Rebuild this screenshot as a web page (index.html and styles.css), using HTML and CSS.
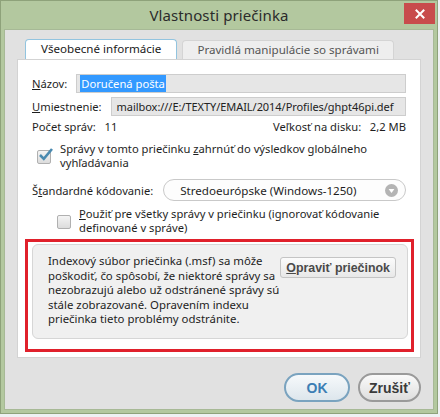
FILE: index.html
```html
<!DOCTYPE html>
<html lang="sk">
<head>
<meta charset="utf-8">
<title>Vlastnosti priečinka</title>
<link rel="stylesheet" href="styles.css">
</head>
<body>
<div class="window">
  <div class="titlebar">
    <span></span>
    <div class="title">Vlastnosti priečinka</div>
    <button class="close" aria-label="Zavrieť">
      <svg width="10" height="10" viewBox="0 0 10 10"><path d="M1.5 1.5 L8.5 8.5 M8.5 1.5 L1.5 8.5" stroke="#fff" stroke-width="2" stroke-linecap="square"/></svg>
    </button>
  </div>
  <div class="client">
    <div class="tabs">
      <div class="tab active">Všeobecné informácie</div>
      <div class="tab">Pravidlá manipulácie so správami</div>
    </div>
    <div class="panel">
      <div class="row field-row">
        <label class="lbl"><u>N</u>ázov:</label>
        <div class="field"><span class="sel">Doručená pošta</span></div>
      </div>
      <div class="row field-row loc">
        <label class="lbl"><u>U</u>miestnenie:</label>
        <div class="field">mailbox:///E:/TEXTY/EMAIL/2014/Profiles/ghpt46pi.def</div>
      </div>
      <div class="row count-row">
        <span>Počet správ:&nbsp;&nbsp; 11</span>
        <span>Veľkosť na disku:&nbsp;&nbsp; 2,2 MB</span>
      </div>
      <div class="check-row first">
        <span class="checkbox checked">
          <svg width="17" height="15" viewBox="0 0 17 15"><path d="M3 8 L6.8 11.8 L15 2" fill="none" stroke="#4a8ab0" stroke-width="2.6"/></svg>
        </span>
        <span class="check-text">Správy v tomto priečinku <u>z</u>ahrnúť do výsledkov globálneho<br>vyhľadávania</span>
      </div>
      <div class="row enc-row">
        <label class="lbl">Š<u>t</u>andardné kódovanie:</label>
        <div class="select">
          <span>Stredoeurópske (Windows-1250)</span>
          <span class="arrow">
            <svg width="13" height="13" viewBox="0 0 13 13"><circle cx="6.5" cy="6.5" r="6.5" fill="#b4b4b4"/><path d="M3.6 5 L9.4 5 L6.5 9 Z" fill="#fff"/></svg>
          </span>
        </div>
      </div>
      <div class="check-row second">
        <span class="checkbox"></span>
        <span class="check-text"><u>P</u>oužiť pre všetky správy v priečinku (ignorovať kódovanie<br>definované v správe)</span>
      </div>
      <div class="highlight">
        <div class="group">
          <p class="group-text">Indexový súbor priečinka (.msf) sa môže<br>poškodiť, čo spôsobí, že niektoré správy sa<br>nezobrazujú alebo už odstránené správy sú<br>stále zobrazované. Opravením indexu<br>priečinka tieto problémy odstránite.</p>
          <button class="repair"><u>O</u>praviť priečinok</button>
        </div>
      </div>
    </div>
    <div class="buttons">
      <button class="btn ok">OK</button>
      <button class="btn cancel">Zrušiť</button>
    </div>
  </div>
</div>
</body>
</html>
```

FILE: styles.css
```css
* { box-sizing: border-box; }
html, body { margin: 0; padding: 0; }
body {
  width: 440px;
  height: 417px;
  background: #eef1f3;
  font-family: "Noto Sans", "DejaVu Sans", sans-serif;
  font-size: 11.2px;
  color: #1e1e1e;
  overflow: hidden;
}
.window {
  width: 438px;
  height: 414px;
  background: #b3c89f;
  border: 1px solid #8ea27a;
  padding: 0 3px 3px 3px;
  display: flex;
  flex-direction: column;
}
.titlebar {
  height: 28px;
  display: grid;
  grid-template-columns: 1fr auto 1fr;
  align-items: start;
}
.title {
  font-size: 15px;
  color: #2b2b2b;
  padding-top: 4px;
  letter-spacing: 0.1px;
}
.close {
  justify-self: end;
  width: 31px;
  height: 21px;
  margin-top: 2px;
  margin-right: -1px;
  border: none;
  background: #c84c4c;
  display: flex;
  align-items: center;
  justify-content: center;
  padding: 0;
}
.client {
  flex: 1;
  background: #e1e1e1;
  border: 1px solid #a7b996;
  padding: 9px 12px 0 12px;
  display: flex;
  flex-direction: column;
}
.tabs {
  display: flex;
  gap: 5px;
  padding-left: 8px;
  height: 20px;
  align-items: flex-end;
  position: relative;
  z-index: 1;
}
.tab {
  height: 19px;
  padding: 0 14px;
  border: 1px solid #d4d4d4;
  border-bottom: none;
  border-radius: 4px 4px 0 0;
  background: #eeeeee;
  color: #555;
  font-size: 11.6px;
  line-height: 17px;
}
.tab.active {
  height: 20px;
  background: #fff;
  border-color: #92c4df;
  color: #1a1a1a;
  padding: 0 15px 0 15px;
  line-height: 18px;
}
.panel {
  background: #fff;
  border: 1px solid #d3d3d3;
  height: 299px;
  padding: 14px 14px 0 14px;
  display: flex;
  flex-direction: column;
}
.row { display: flex; align-items: center; }
.field-row { gap: 9px; height: 19px; }
.field-row.loc { margin-top: 4px; }
.lbl { white-space: nowrap; }
.field {
  flex: 1;
  height: 19px;
  background: #e6e6e6;
  border: 1px solid #cdcdcd;
  padding: 0 3px;
  line-height: 17px;
  white-space: nowrap;
  overflow: hidden;
  color: #222;
}
.loc .field { padding-left: 5px; font-size: 11px; letter-spacing: -0.05px; }
.sel {
  background: #3399ff;
  color: #fff;
  padding: 1px 1px;
}
.count-row {
  justify-content: space-between;
  margin-top: 2px;
  height: 17px;
}
.check-row {
  display: flex;
  align-items: flex-start;
  line-height: 14px;
}
.check-row.first { margin-top: 7px; padding-left: 5px; gap: 9px; }
.check-row.second { margin-top: 6px; padding-left: 25px; gap: 8px; line-height: 13.5px; }
.checkbox {
  width: 14px;
  height: 14px;
  margin-top: 8px;
  border: 1px solid #b0b0b0;
  border-radius: 2px;
  background: linear-gradient(#f4f4f4, #dcdcdc);
  position: relative;
  flex: none;
}
.checkbox svg { position: absolute; left: -1px; top: -4px; }
.enc-row { margin-top: 9px; gap: 10px; height: 22px; }
.select {
  flex: 1;
  height: 22px;
  border: 1px solid #c9c9c9;
  border-radius: 11px;
  background: #fdfdfd;
  display: flex;
  align-items: center;
  justify-content: space-between;
  padding: 0 7px 0 16px;
  font-size: 11.6px;
}
.arrow { display: flex; }
.highlight {
  margin-top: 5px;
  margin-left: -7px;
  width: 389px;
  border: 3px solid #e0202b;
  padding: 2px 3px 10px 4px;
}
.group {
  background: #f0f0f0;
  border: 1px solid #d6d6d6;
  border-radius: 6px;
  height: 95px;
  display: flex;
  justify-content: space-between;
  align-items: flex-start;
  padding: 9px 11px 0 15px;
}
.group-text {
  margin: 0;
  line-height: 14.6px;
  font-size: 11.4px;
  white-space: nowrap;
}
.repair {
  flex: none;
  white-space: nowrap;
  margin-top: 3px;
  height: 21px;
  padding: 0 5px;
  font-family: "Liberation Sans", Arial, sans-serif;
  font-weight: bold;
  font-size: 12.4px;
  color: #4a4a4a;
  background: linear-gradient(#fbfbfb, #e8e8e8);
  border: 1px solid #c4c4c4;
  border-radius: 3px;
}
.buttons {
  display: flex;
  justify-content: flex-end;
  gap: 8px;
  margin-top: 15px;
}
.btn {
  height: 29px;
  border-radius: 15px;
  font-family: "Liberation Sans", Arial, sans-serif;
  font-weight: bold;
  font-size: 14px;
  padding: 0;
}
.ok {
  width: 66px;
  color: #3c7eb4;
  border: 2px solid #7aa3bf;
  background: linear-gradient(#f6f9fb, #dde6ec);
}
.cancel {
  width: 63px;
  color: #3a3a3a;
  border: 2px solid #9a9a9a;
  background: linear-gradient(#fafafa, #dedede);
}
```
